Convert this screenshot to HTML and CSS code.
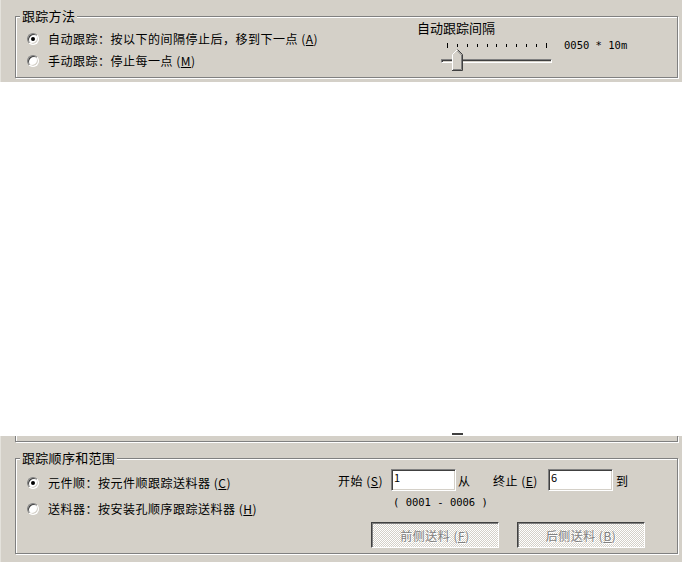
FILE: index.html
```html
<!DOCTYPE html>
<html lang="zh-CN">
<head>
<meta charset="utf-8">
<title>跟踪</title>
<link rel="stylesheet" href="styles.css">
</head>
<body>
<div class="window">
  <section class="panel panel-top">
    <div class="group group-method">
      <div class="group-title">跟踪方法</div>
      <div class="group-body">
        <div class="radios radios-method">
          <label class="radio-row"><span class="radio checked"></span><span class="radio-text">自动跟踪<span class="punct">：</span>按以下的间隔停止后，移到下一点 (<u>A</u>)</span></label>
          <label class="radio-row"><span class="radio"></span><span class="radio-text">手动跟踪<span class="punct">：</span>停止每一点 (<u>M</u>)</span></label>
        </div>
        <div class="interval">
          <div class="interval-title">自动跟踪间隔</div>
          <div class="interval-row">
            <div class="slider">
              <div class="ticks"><i class="major"></i><i></i><i></i><i></i><i></i><i></i><i></i><i></i><i></i><i></i><i class="major"></i></div>
              <div class="track"></div>
              <svg class="thumb" width="11" height="22" viewBox="0 0 11 22">
                <path d="M0.5 21.5V5.5L5.5 0.5L10.5 5.5V21.5Z" fill="#d4d0c8"/>
                <path d="M0.5 21V5.5L5.5 0.5" stroke="#fff" fill="none"/>
                <path d="M5.5 0.5L10.5 5.5V21.5H0" stroke="#404040" fill="none"/>
                <path d="M5.5 2L9.5 6V20.5H1" stroke="#808080" fill="none"/>
              </svg>
            </div>
            <span class="interval-value">0050 * 10m</span>
          </div>
        </div>
      </div>
    </div>
  </section>
  <div class="blank"></div>
  <section class="panel panel-bottom">
    <div class="grip"></div>
    <div class="group-tail"></div>
    <div class="group group-order">
      <div class="group-title">跟踪顺序和范围</div>
      <div class="group-body">
        <div class="radios radios-order">
          <label class="radio-row"><span class="radio checked"></span><span class="radio-text">元件顺<span class="punct">：</span>按元件顺跟踪送料器 (<u>C</u>)</span></label>
          <label class="radio-row"><span class="radio"></span><span class="radio-text">送料器<span class="punct">：</span>按安装孔顺序跟踪送料器 (<u>H</u>)</span></label>
        </div>
        <div class="range">
          <div class="range-row">
            <span class="range-label">开始 (<u>S</u>)</span>
            <input class="field" type="text" value="1">
            <span class="range-from">从</span>
            <span class="range-label range-label-end">终止 (<u>E</u>)</span>
            <input class="field" type="text" value="6">
            <span class="range-to">到</span>
          </div>
          <div class="range-hint">( 0001 - 0006 )</div>
          <div class="range-buttons">
            <button class="btn btn-front" type="button" disabled>前侧送料 (<u>F</u>)</button>
            <button class="btn btn-back" type="button" disabled>后侧送料 (<u>B</u>)</button>
          </div>
        </div>
      </div>
    </div>
  </section>
</div>
</body>
</html>
```

FILE: styles.css
```css
* { box-sizing: border-box; }
html, body { margin: 0; padding: 0; }
body {
  width: 682px;
  height: 562px;
  overflow: hidden;
  background: #fff;
  color: #000;
  font-family: "Noto Sans CJK SC", "Noto Sans", sans-serif;
  font-size: 12px;
}
.window {
  width: 682px;
  height: 562px;
  display: flex;
  flex-direction: column;
}
.panel {
  position: relative;
  background: #d4d0c8;
  box-shadow: inset 1px 0 #e4e2dc;
}
.panel-top {
  height: 82px;
  padding: 16px 0 0 15px;
}
.blank {
  height: 354px;
  background: #fff;
}
.panel-bottom {
  height: 126px;
  padding: 0 0 0 15px;
}

/* etched group boxes */
.group {
  width: 663px;
  border: 1px solid #808080;
  box-shadow: inset 1px 1px #fff, 1px 1px #fff;
}
.group-title {
  width: fit-content;
  margin: -8px 0 0 4px;
  padding: 0 2px;
  background: #d4d0c8;
  font-size: 13px;
  line-height: 14px;
  letter-spacing: 0.3px;
}
.group-body {
  display: flex;
}
.group-method { height: 62px; }
.group-order { height: 96px; margin-top: 16px; }
.group-tail {
  width: 663px;
  height: 6px;
  border: 1px solid #808080;
  border-top: 0;
  box-shadow: inset 1px 0 #fff, 1px 1px #fff;
}
.grip {
  position: absolute;
  left: 452px;
  top: -3px;
  width: 11px;
  height: 2px;
  background: #404040;
}

/* radios */
.radios {
  display: flex;
  flex-direction: column;
  padding-left: 11px;
}
.radios-method { width: 401px; padding-top: 5px; }
.radios-order { width: 322px; padding-top: 5px; }
.radio-row {
  display: flex;
  align-items: center;
  height: 22px;
  letter-spacing: 0.5px;
  line-height: 14px;
}
.radios-order .radio-row { height: 26px; }
.punct {
  font-family: "Noto Sans CJK JP", "Noto Sans CJK SC", sans-serif;
}
.radio {
  position: relative;
  flex: none;
  width: 12px;
  height: 12px;
  margin-right: 9px;
  border-radius: 50%;
  border: 1px solid;
  border-color: #808080 #fff #fff #808080;
  background: #fff;
  box-shadow: inset 1px 1px #404040, inset -1px -1px #d4d0c8;
}
.radio.checked::after {
  content: "";
  position: absolute;
  left: 3px;
  top: 3px;
  width: 4px;
  height: 4px;
  border-radius: 50%;
  background: #000;
}

/* interval slider */
.interval {
  display: flex;
  flex-direction: column;
}
.interval-title {
  font-size: 13px;
  line-height: 12px;
  margin-top: -1px;
}
.interval-row {
  display: flex;
  align-items: flex-start;
  margin-top: 4px;
}
.slider {
  position: relative;
  width: 111px;
  height: 34px;
  margin-left: 24px;
  padding-top: 5px;
}
.ticks {
  display: flex;
  justify-content: space-between;
  align-items: center;
  width: 100px;
  height: 5px;
  margin-left: 6px;
}
.ticks i {
  display: block;
  width: 1px;
  height: 3px;
  background: #000;
}
.ticks i.major { height: 5px; }
.track {
  width: 111px;
  height: 4px;
  margin-top: 11px;
  border: 1px solid;
  border-color: #808080 #fff #fff #808080;
  box-shadow: inset 1px 1px #404040;
}
.thumb {
  position: absolute;
  left: 11px;
  top: 11px;
}
.interval-value {
  margin-left: 12px;
  line-height: 14px;
  font-family: "DejaVu Sans Mono", monospace;
  font-size: 10.5px;
}

/* range */
.range {
  display: flex;
  flex-direction: column;
  padding-top: 4px;
}
.range-row {
  display: flex;
  align-items: center;
  height: 22px;
  letter-spacing: 0.5px;
}
.range-label { width: 53px; }
.range-label-end { width: 55px; }
.range-from { width: 37px; padding-left: 2px; }
.range-to { padding-left: 3px; }
.field {
  width: 65px;
  height: 22px;
  margin: 0;
  padding: 0 2px 6px;
  border: 1px solid;
  border-color: #808080 #fff #fff #808080;
  box-shadow: inset 1px 1px #404040, inset -1px -1px #d4d0c8;
  background: #fff;
  font-family: "Noto Sans CJK SC", sans-serif;
  font-size: 11px;
  color: #000;
  outline: none;
  border-radius: 0;
}
.range-hint {
  margin: 4px 0 0 55px;
  line-height: 14px;
  font-family: "DejaVu Sans Mono", monospace;
  font-size: 10.5px;
}
.range-buttons {
  display: flex;
  margin-top: 13px;
}
.btn {
  width: 128px;
  height: 26px;
  margin: 0;
  padding: 0;
  border: 1px solid;
  border-color: #404040 #fff #fff #404040;
  box-shadow: inset 1px 1px #808080;
  border-radius: 0;
  background: repeating-conic-gradient(#fff 0 25%, #d4d0c8 0 50%) 0 0 / 2px 2px;
  font-family: "Noto Sans CJK SC", sans-serif;
  font-size: 12px;
  letter-spacing: 0.5px;
  color: #808080;
  text-shadow: 1px 1px #fff;
}
.btn-front { margin-left: 33px; }
.btn-back { margin-left: 18px; }
```
